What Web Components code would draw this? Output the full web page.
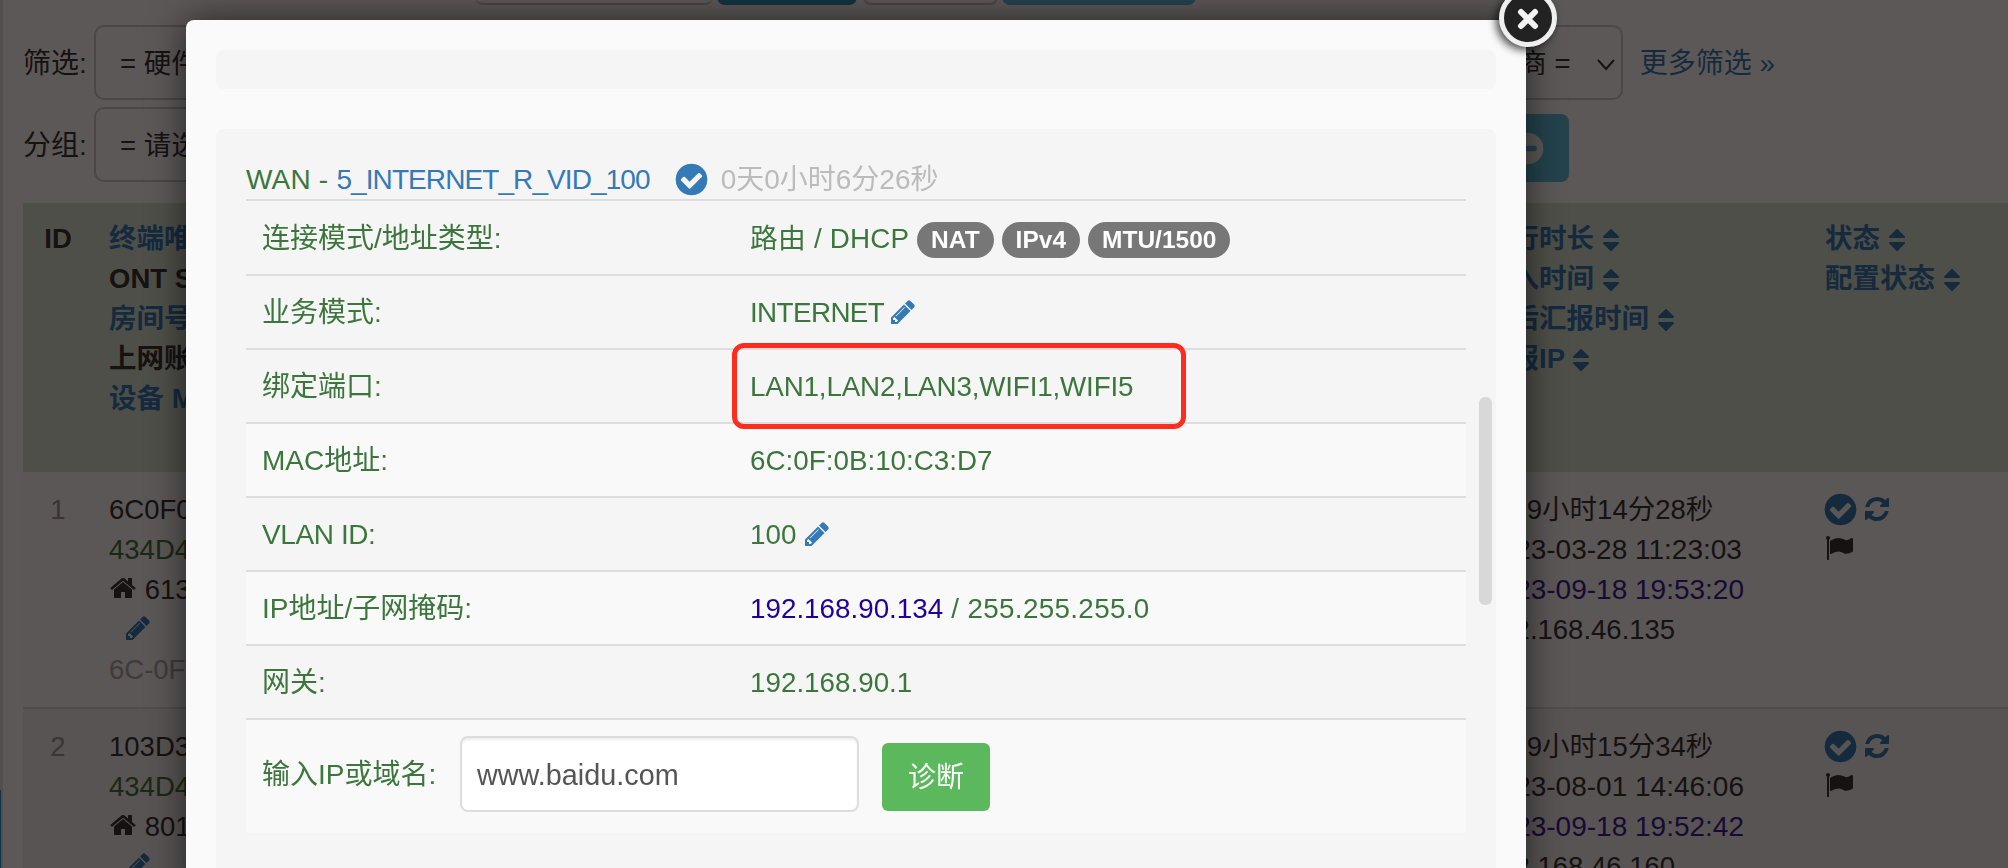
<!DOCTYPE html>
<html lang="zh">
<head>
<meta charset="utf-8">
<title>ONT</title>
<style>
  html, body { margin: 0; height: 100%; overflow: hidden; background: #fff; }
  body { font: 27.5px/40px "Liberation Sans", "Noto Sans CJK SC", sans-serif; color: #333; }
</style>
</head>
<body>
<app-page>
  <filter-bar></filter-bar>
  <device-table>
    <device-row n="1" sn="6C0F0B" ont="434D4C" room="6131" mac="6C-0F-0B" up="7天9小时14分28秒" joined="2023-03-28 11:23:03" seen="2023-09-18 19:53:20" ip="192.168.46.135"></device-row>
    <device-row n="2" sn="103D3E" ont="434D4C" room="8012" mac="10-3D-3E" up="7天9小时15分34秒" joined="2023-08-01 14:46:06" seen="2023-09-18 19:52:42" ip="192.168.46.160" alt></device-row>
  </device-table>
</app-page>
<modal-backdrop></modal-backdrop>
<wan-modal>
  <info-well class="empty"></info-well>
  <info-well>
    <wan-heading vid="5_INTERNET_R_VID_100" uptime="0天0小时6分26秒"></wan-heading>
    <info-row label="连接模式/地址类型:" tall><span style="letter-spacing:.2px">路由 / DHCP</span> <text-badge>NAT</text-badge><text-badge>IPv4</text-badge><text-badge>MTU/1500</text-badge></info-row>
    <info-row label="业务模式:"><span style="letter-spacing:-.6px">INTERNET</span> <fa-icon name="pencil" size="28" class="edit" style="margin-left:-3px"></fa-icon></info-row>
    <info-row label="绑定端口:"><span style="letter-spacing:-.17px">LAN1,LAN2,LAN3,WIFI1,WIFI5</span></info-row>
    <info-row label="MAC地址:" light>6C:0F:0B:10:C3:D7</info-row>
    <info-row label="VLAN ID:" tight>100 <fa-icon name="pencil" size="28" class="edit" style="margin-left:-1px"></fa-icon></info-row>
    <info-row label="IP地址/子网掩码:" light><span style="color:#20009a">192.168.90.134</span><span style="letter-spacing:.34px"> / 255.255.255.0</span></info-row>
    <info-row label="网关:">192.168.90.1</info-row>
    <diag-row></diag-row>
  </info-well>
</wan-modal>

<script>
const ICONS = {
  pencil: "M491 1536l91-91-235-235-91 91v107h128v128h107zm523-928q0-22-22-22-10 0-17 7l-542 542q-7 7-7 17 0 22 22 22 10 0 17-7l542-542q7-7 7-17zm-54-192l416 416-832 832h-416v-416zm683 96q0 53-37 90l-166 166-416-416 166-165q36-38 90-38 53 0 91 38l235 234q37 39 37 91z",
  check: "M1412 734q0-28-18-46l-91-90q-19-19-45-19t-45 19l-408 407-226-226q-19-19-45-19t-45 19l-91 90q-18 18-18 46 0 27 18 45l362 362q19 19 45 19 27 0 46-19l543-543q18-18 18-45zm252 162q0 209-103 385.5t-279.5 279.5-385.5 103-385.5-103-279.5-279.5-103-385.5 103-385.5 279.5-279.5 385.5-103 385.5 103 279.5 279.5 103 385.5z",
  refresh: "M1639 1056q0 5-1 7-64 268-268 434.5t-478 166.5q-146 0-282.5-55t-243.5-157l-129 129q-19 19-45 19t-45-19-19-45v-448q0-26 19-45t45-19h448q26 0 45 19t19 45-19 45l-137 137q71 66 161 102t187 36q134 0 250-65t186-179q11-17 53-117 8-23 30-23h192q13 0 22.5 9.5t9.5 22.5zm25-800v448q0 26-19 45t-45 19h-448q-26 0-45-19t-19-45 19-45l138-138q-148-137-349-137-134 0-250 65t-186 179q-11 17-53 117-8 23-30 23h-199q-13 0-22.5-9.5t-9.5-22.5v-7q65-268 270-434.5t480-166.5q146 0 284 55.5t245 156.5l130-129q19-19 45-19t45 19 19 45z",
  home: "M1472 992v480q0 26-19 45t-45 19h-384v-384h-256v384h-384q-26 0-45-19t-19-45v-480q0-1 .5-3t.5-3l575-474 575 474q1 2 1 6zm223-69l-62 74q-8 9-21 11h-3q-13 0-21-7l-692-577-692 577q-12 8-24 7-13-2-21-11l-62-74q-8-10-7-23.5t11-21.5l719-599q32-26 76-26t76 26l244 204v-195q0-14 9-23t23-9h192q14 0 23 9t9 23v408l219 182q10 8 11 21.5t-7 23.5z",
  flag: "M320 256q0 72-64 110v1266q0 13-9.5 22.5t-22.5 9.5h-64q-13 0-22.5-9.5t-9.5-22.5v-1266q-64-38-64-110 0-53 37.5-90.5t90.5-37.5 90.5 37.5 37.5 90.5zm1472 64v763q0 25-12.5 38.5t-39.5 27.5q-215 116-369 116-61 0-123.5-22t-108.5-48-115.5-48-142.5-22q-192 0-464 146-17 9-33 9-26 0-45-19t-19-45v-742q0-32 31-55 21-14 79-43 236-120 421-120 107 0 200 29t219 88q38 19 88 19 54 0 117.5-21t110-47 88-47 54.5-21q26 0 45 19t19 45z",
  sort: "M1408 1088q0 26-19 45l-448 448q-19 19-45 19t-45-19l-448-448q-19-19-19-45t19-45 45-19h896q26 0 45 19t19 45zm0-384q0 26-19 45t-45 19h-896q-26 0-45-19t-19-45 19-45l448-448q19-19 45-19t45 19l448 448q19 19 19 45z",
  minus: "M1344 960v-128q0-26-19-45t-45-19h-768q-26 0-45 19t-19 45v128q0 26 19 45t45 19h768q26 0 45-19t19-45zm320-64q0 209-103 385.5t-279.5 279.5-385.5 103-385.5-103-279.5-279.5-103-385.5 103-385.5 279.5-279.5 385.5-103 385.5 103 279.5 279.5 103 385.5z"
};

class FaIcon extends HTMLElement {
  connectedCallback() {
    const size = this.getAttribute("size") || 28;
    const root = this.attachShadow({mode: "open"});
    root.innerHTML = `
    <style>
      :host { display: inline-block; line-height: 0; vertical-align: -4px; }
      svg { display: block; }
    </style>
    <svg width="${size}" height="${size}" viewBox="0 0 1792 1792"><path fill="currentColor" d="${ICONS[this.getAttribute("name")]}"/></svg>`;
  }
}

class AppPage extends HTMLElement {
  constructor() {
    super();
    this.attachShadow({mode: "open"}).innerHTML = `
    <style>
      :host { display: flex; width: 2008px; height: 868px; overflow: hidden; }
      .rail { width: 3px; flex: none; background: #e4e4e4; padding-top: 790px; box-sizing: border-box; }
      .rail div { width: 1px; height: 78px; background: #1b9ad0; }
      .main { flex: 1; padding-left: 20px; }
    </style>
    <div class="rail"><div></div></div>
    <div class="main"><slot></slot></div>`;
  }
}

class FilterBar extends HTMLElement {
  constructor() {
    super();
    this.attachShadow({mode: "open"}).innerHTML = `
    <style>
      :host { display: block; height: 203px; }
      .top { display: flex; height: 5px; margin-left: 452px; overflow: hidden; align-items: flex-end; }
      .top div { height: 60px; box-sizing: border-box; border-radius: 0 0 8px 8px; flex: none; }
      .sel { width: 238px; border-bottom: 2px solid #ccc; margin-right: 4px; }
      .b1 { width: 140px; background: #2a94ba; margin-right: 6px; }
      .b2 { width: 135px; border: 2px solid #ccc; margin-right: 4px; }
      .b3 { width: 194px; background: #5bc0de; }
      .row { display: flex; align-items: center; gap: 7px; height: 75px; }
      .r1 { width: 1752px; margin-top: 20px; }
      .r2 { width: 1546px; margin-top: 7px; }
      .box { height: 75px; box-sizing: border-box; border: 2px solid #ccc; border-radius: 10px; padding: 2px 5px 0 24px;
             display: flex; align-items: center; justify-content: space-between; }
      .grow { flex: 1; }
      .last { width: 210px; flex: none; padding-left: 26px; }
      a { color: #337ab7; margin-left: 10px; white-space: nowrap; padding-top: 2px; font-size: 28px; }
      .go { width: 84px; height: 68px; flex: none; align-self: flex-end; margin-left: auto; background: #5bc0de; color: #fff; border-radius: 8px;
            display: flex; align-items: center; justify-content: center; }
      label { width: 64px; flex: none; white-space: nowrap; padding-top: 2px; font-size: 28px; }
    </style>
    <div class="top"><div class="sel"></div><div class="b1"></div><div class="b2"></div><div class="b3"></div></div>
    <div class="row r1">
      <label>筛选:</label>
      <div class="box grow"><span>= 硬件型号 =</span></div>
      <div class="box last"><span>= 运营商 =</span><svg width="20" height="20" viewBox="0 0 20 20"><path d="M2 6l8 9 8-9" fill="none" stroke="#333" stroke-width="2"/></svg></div>
      <a>更多筛选 »</a>
    </div>
    <div class="row r2">
      <label>分组:</label>
      <div class="box grow"><span>= 请选择分组 =</span></div>
      <div class="go"><fa-icon name="minus" size="37"></fa-icon></div>
    </div>`;
  }
}

class DeviceTable extends HTMLElement {
  constructor() {
    super();
    const sort = `<fa-icon name="sort" size="28" style="margin-left:-5px;vertical-align:-5.5px"></fa-icon>`;
    this.attachShadow({mode: "open"}).innerHTML = `
    <style>
      :host { display: block; }
      .head { display: grid; grid-template-columns: 70px 1375px 341px 1fr; background: #d7e5d4; height: 269px; font-weight: bold; color: #337ab7; }
      .cell { padding: 16px 0 0 16px; white-space: nowrap; }
      .id { padding-left: 0; text-align: center; color: #333; }
      b { color: #333; font-weight: bold; }
      div > div { height: 40px; }
    </style>
    <div class="head">
      <section class="cell id">ID</section>
      <section class="cell"><div>终端唯一</div><div><b>ONT SN</b></div><div>房间号</div><div><b>上网账号</b></div><div>设备 MAC</div></section>
      <section class="cell"><div>运行时长 ${sort}</div><div>接入时间 ${sort}</div><div>最后汇报时间 ${sort}</div><div>上报IP ${sort}</div></section>
      <section class="cell"><div>状态 ${sort}</div><div>配置状态 ${sort}</div></section>
    </div>
    <slot></slot>`;
  }
}

class DeviceRow extends HTMLElement {
  connectedCallback() {
    const a = (n) => this.getAttribute(n);
    this.attachShadow({mode: "open"}).innerHTML = `
    <style>
      :host { display: grid; grid-template-columns: 70px 1375px 341px 1fr; height: 237px; box-sizing: border-box; border-bottom: 2px solid #ddd;
              background: ${this.hasAttribute("alt") ? "#f3f3f3" : "#fbfbfb"}; }
      .cell { padding: 18px 0 0 16px; white-space: nowrap; }
      .n { padding-left: 0; text-align: center; color: #999; }
      .line { height: 40px; }
      .green { color: #3c763d; }
      .gray { color: #aaa; }
      .purple { color: #3a1d9a; }
      .blue { color: #337ab7; }
      .edit { padding-left: 15px; }
      .date { font-size: 28px; }
    </style>
    <section class="cell n">${a("n")}</section>
    <section class="cell">
      <div class="line">${a("sn")}</div>
      <div class="line green">${a("ont")}</div>
      <div class="line"><fa-icon name="home" size="28" style="vertical-align:-3px"></fa-icon> ${a("room")}</div>
      <div class="line edit blue"><fa-icon name="pencil" size="28" style="vertical-align:-3px"></fa-icon></div>
      <div class="line gray">${a("mac")}</div>
    </section>
    <section class="cell">
      <div class="line">${a("up")}</div>
      <div class="line date">${a("joined")}</div>
      <div class="line date purple">${a("seen")}</div>
      <div class="line">${a("ip")}</div>
    </section>
    <section class="cell">
      <div class="line blue"><fa-icon name="check" size="37" style="margin-left:-3px;vertical-align:-9px"></fa-icon> <fa-icon name="refresh" size="28" style="margin-left:-4px"></fa-icon></div>
      <div class="line"><fa-icon name="flag" size="28" style="vertical-align:-3px"></fa-icon></div>
    </section>`;
  }
}

class ModalBackdrop extends HTMLElement {
  constructor() {
    super();
    this.attachShadow({mode: "open"}).innerHTML = `
    <style>:host { display: block; position: fixed; inset: 0; background: rgba(8, 2, 0, .66); }</style>`;
  }
}

class WanModal extends HTMLElement {
  constructor() {
    super();
    this.attachShadow({mode: "open"}).innerHTML = `
    <style>
      :host { display: block; position: fixed; left: 186px; top: 20px; width: 1340px; height: 880px; }
      .dialog { height: 100%; box-sizing: border-box; padding: 30px; background: #fafafa; border-radius: 8px;
                overflow: hidden; box-shadow: 0 0 36px rgba(0, 0, 0, .6); }
      .close { position: absolute; left: 1313px; top: -31px; width: 58px; height: 58px; box-sizing: border-box; border: 5px solid #efefef; border-radius: 50%;
               background: #222; box-shadow: -3px 3px 9px rgba(0, 0, 0, .7); display: flex; align-items: center; justify-content: center; padding-top: 2px; }
      .bar { position: absolute; left: 1293px; top: 377px; width: 13px; height: 208px; border-radius: 6px; background: #d8d8d8; }
      .mark { position: absolute; left: 546px; top: 323px; width: 454px; height: 86px; box-sizing: border-box; border: 5px solid #ff2d20; border-radius: 12px; }
    </style>
    <div class="dialog"><slot></slot></div>
    <div class="bar"></div>
    <div class="mark"></div>
    <div class="close"><svg width="24" height="24" viewBox="0 0 24 24"><path d="M5 5l14 14M19 5L5 19" stroke="#f2f2f2" stroke-width="6" stroke-linecap="round"/></svg></div>`;
  }
}

class InfoWell extends HTMLElement {
  constructor() {
    super();
    this.attachShadow({mode: "open"}).innerHTML = `
    <style>
      :host { display: block; background: #f5f5f5; border-radius: 8px; padding: 30px 30px 60px; color: #3c763d; }
      :host(.empty) { height: 39px; padding: 0; margin-bottom: 40px; }
    </style>
    <slot></slot>`;
  }
}

class WanHeading extends HTMLElement {
  connectedCallback() {
    this.attachShadow({mode: "open"}).innerHTML = `
    <style>
      :host { display: flex; align-items: center; height: 38px; padding-top: 2px; border-bottom: 2px solid #ddd; white-space: pre; font-size: 28px; }
      .wan { letter-spacing: .2px; }
      .vid { color: #337ab7; letter-spacing: -.91px; }
      .ok { color: #337ab7; margin: -2px 11px 0 23px; }
      .time { color: #bbb; }
    </style>
    <span class="wan">WAN - </span><span class="vid">${this.getAttribute("vid")}</span>
    <fa-icon class="ok" name="check" size="37"></fa-icon>
    <span class="time">${this.getAttribute("uptime")}</span>`;
  }
}

class InfoRow extends HTMLElement {
  connectedCallback() {
    const bg = this.hasAttribute("light") ? "#f9f9f9" : "transparent";
    const h = this.hasAttribute("tall") ? 75 : 74;
    const sp = this.hasAttribute("tight") ? "-.4px" : "0";
    this.attachShadow({mode: "open"}).innerHTML = `
    <style>
      :host { display: grid; grid-template-columns: 488px 1fr; height: ${h}px; box-sizing: border-box; align-items: center; border-bottom: 2px solid #ddd; background: ${bg}; }
      .label { padding: 2px 0 0 16px; font-size: 28px; letter-spacing: ${sp}; }
      .value { padding: 2px 0 0 16px; white-space: nowrap; font-size: 27.8px; }
      ::slotted(.edit) { color: #337ab7; }
    </style>
    <div class="label">${this.getAttribute("label")}</div>
    <div class="value"><slot></slot></div>`;
  }
}

class TextBadge extends HTMLElement {
  constructor() {
    super();
    this.attachShadow({mode: "open"}).innerHTML = `
    <style>
      :host { display: inline-block; height: 36px; line-height: 36px; padding: 0 14px; margin-right: 8px; border-radius: 18px; background: #777; color: #fff;
              font-size: 24.5px; font-weight: bold; vertical-align: 0; }
    </style>
    <slot></slot>`;
  }
}

class DiagRow extends HTMLElement {
  constructor() {
    super();
    this.attachShadow({mode: "open"}).innerHTML = `
    <style>
      :host { display: flex; align-items: flex-start; height: 113px; box-sizing: border-box; padding: 16px 0 0 16px; background: #f9f9f9; }
      label { width: 198px; flex: none; line-height: 78px; white-space: nowrap; font-size: 28px; }
      .input { width: 399px; height: 76px; box-sizing: border-box; flex: none; background: #fff; border: 2px solid #ddd; border-radius: 8px;
               box-shadow: inset 0 2px 2px rgba(0, 0, 0, .07); padding-left: 15px; line-height: 74px; color: #555; font-size: 28.8px; }
      .btn { width: 108px; height: 68px; margin: 7px 0 0 23px; background: #5cb85c; border-radius: 6px; color: #fff; text-align: center; line-height: 70px; font-size: 28px; }
    </style>
    <label>输入IP或域名:</label>
    <div class="input">www.baidu.com</div>
    <div class="btn">诊断</div>`;
  }
}

customElements.define("fa-icon", FaIcon);
customElements.define("app-page", AppPage);
customElements.define("filter-bar", FilterBar);
customElements.define("device-table", DeviceTable);
customElements.define("device-row", DeviceRow);
customElements.define("modal-backdrop", ModalBackdrop);
customElements.define("wan-modal", WanModal);
customElements.define("info-well", InfoWell);
customElements.define("wan-heading", WanHeading);
customElements.define("info-row", InfoRow);
customElements.define("text-badge", TextBadge);
customElements.define("diag-row", DiagRow);
</script>
</body>
</html>
